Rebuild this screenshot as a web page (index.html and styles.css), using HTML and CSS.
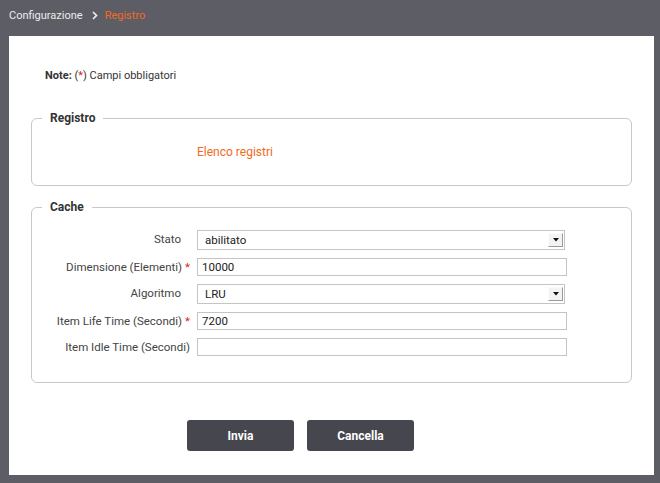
FILE: index.html
```html
<!DOCTYPE html>
<html lang="it">
<head>
<meta charset="utf-8">
<title>Registro</title>
<link rel="stylesheet" href="styles.css">
</head>
<body>
<div class="topbar">
  <span class="crumb">Configurazione</span>
  <svg class="chev" width="6" height="9" viewBox="0 0 6 9"><path d="M1 1 L4.5 4.5 L1 8" fill="none" stroke="#ececec" stroke-width="1.7"/></svg>
  <span class="crumb-active">Registro</span>
</div>
<div class="panel">
  <p class="note"><b>Note:</b> (<span class="req">*</span>) Campi obbligatori</p>
  <fieldset class="box box-reg">
    <legend>Registro</legend>
    <a class="link">Elenco registri</a>
  </fieldset>
  <fieldset class="box box-cache">
    <legend>Cache</legend>
    <div class="row sel-row">
      <label>Stato</label>
      <div class="select"><span>abilitato</span><span class="dd"><svg width="6" height="4" viewBox="0 0 6 4"><path d="M0 0 H6 L3 3.5 Z" fill="#111"/></svg></span></div>
    </div>
    <div class="row">
      <label>Dimensione (Elementi)<span class="star">*</span></label>
      <div class="input">10000</div>
    </div>
    <div class="row sel-row">
      <label>Algoritmo</label>
      <div class="select"><span>LRU</span><span class="dd"><svg width="6" height="4" viewBox="0 0 6 4"><path d="M0 0 H6 L3 3.5 Z" fill="#111"/></svg></span></div>
    </div>
    <div class="row">
      <label>Item Life Time (Secondi)<span class="star">*</span></label>
      <div class="input">7200</div>
    </div>
    <div class="row">
      <label>Item Idle Time (Secondi)</label>
      <div class="input"></div>
    </div>
  </fieldset>
  <div class="buttons">
    <button class="btn btn-invia">Invia</button>
    <button class="btn btn-cancella">Cancella</button>
  </div>
</div>
</body>
</html>
```
FILE: styles.css
```css
html, body {
  margin: 0;
  padding: 0;
}
body {
  background: #5c5d65;
  font-family: Roboto, "Liberation Sans", sans-serif;
  font-size: 12px;
  color: #333;
  width: 660px;
  height: 483px;
  overflow: hidden;
}
.topbar {
  height: 36px;
  display: flex;
  align-items: center;
  padding-left: 9px;
  box-sizing: border-box;
  padding-bottom: 6px;
  font-size: 11px;
}
.crumb {
  color: #ececec;
}
.chev {
  margin: 0 7px 0 9px;
}
.crumb-active {
  color: #f26a21;
}
.panel {
  background: #fff;
  margin-left: 9px;
  width: 645px;
  height: 439px;
  box-sizing: border-box;
  padding: 33px 22px 0 22px;
}
.note {
  margin: 0 0 0 14px;
  line-height: 14px;
  font-size: 11px;
  color: #333;
}
.note b {
  font-weight: bold;
  color: #333;
}
.req, .star {
  color: #e02020;
}
.box {
  margin: 0;
  border: 1px solid #c8c8c8;
  border-radius: 6px;
  padding: 0;
  min-width: 0;
}
.box legend {
  font-weight: bold;
  color: #333;
  padding: 0 8px;
  margin-left: 10px;
  line-height: 14px;
}
.box-reg {
  margin-top: 28px;
  height: 75px;
  box-sizing: border-box;
  padding: 20px 0 0 0;
}
.link {
  display: block;
  margin-left: 165px;
  color: #f26a21;
  line-height: 14px;
}
.box-cache {
  margin-top: 14px;
  height: 183px;
  box-sizing: border-box;
  padding: 16px 0 0 0;
}
.row {
  display: flex;
  align-items: center;
  height: 18px;
  margin-bottom: 8px;
  font-size: 11.5px;
}
.row.sel-row {
  height: 20px;
}
.row label {
  width: 158px;
  text-align: right;
  color: #444;
  padding-right: 7px;
  margin-top: -1px;
}
.sel-row label {
  padding-right: 16px;
  width: 149px;
  margin-top: -3px;
}
.star {
  margin-left: 3px;
}
.select {
  width: 368px;
  height: 20px;
  box-sizing: border-box;
  border: 1px solid #c4c4c4;
  display: flex;
  align-items: center;
  justify-content: space-between;
  padding: 0 1px 0 7px;
  color: #222;
}
.dd {
  width: 15px;
  height: 14px;
  box-sizing: border-box;
  background: #f3f3f3;
  border-right: 1px solid #9a9a9a;
  border-bottom: 1px solid #9a9a9a;
  border-top: 1px solid #fbfbfb;
  border-left: 1px solid #fbfbfb;
  display: flex;
  align-items: center;
  justify-content: center;
}
.input {
  width: 370px;
  height: 18px;
  box-sizing: border-box;
  border: 1px solid #c4c4c4;
  padding: 0 4px;
  line-height: 16px;
  color: #222;
}
.buttons {
  display: flex;
  gap: 13px;
  margin: 37px 0 0 156px;
}
.btn {
  height: 31px;
  border: none;
  border-radius: 3px;
  background: #45464e;
  color: #fff;
  font-family: Roboto, "Liberation Sans", sans-serif;
  font-size: 12px;
  font-weight: bold;
  padding: 0;
}
.btn-invia {
  width: 107px;
}
.btn-cancella {
  width: 107px;
}
```
